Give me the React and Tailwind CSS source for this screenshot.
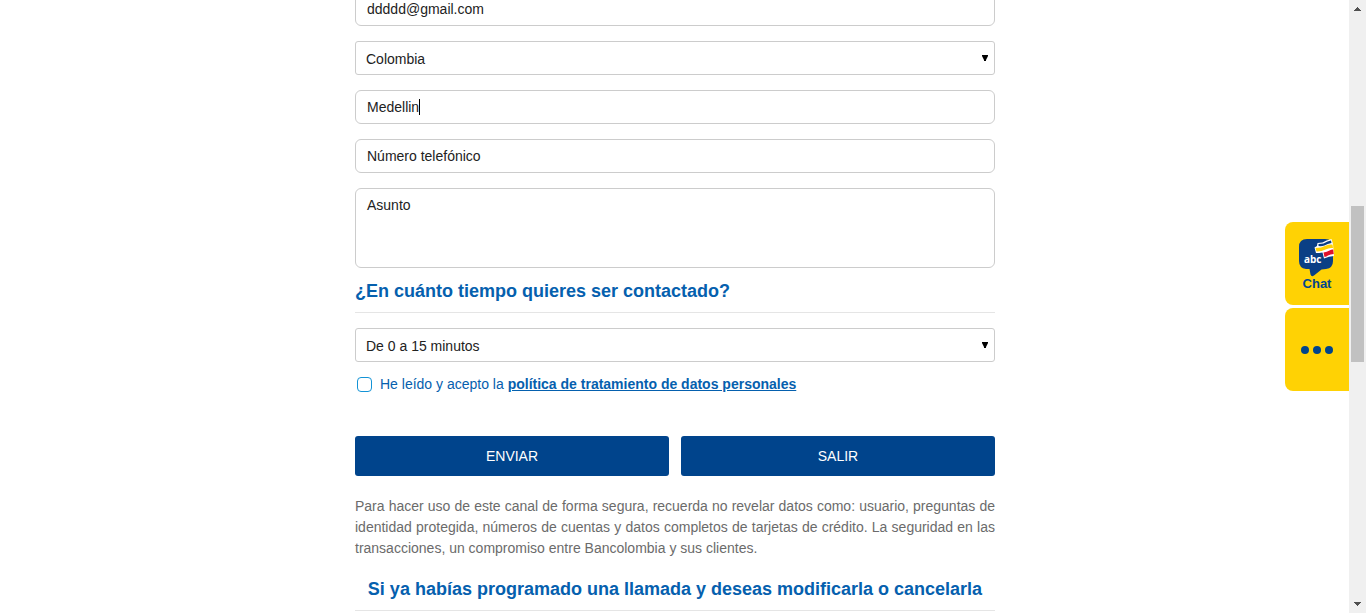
import React from "react";

const field =
  "block h-[34px] w-full rounded-md border border-[#ccc] bg-white px-[11px] text-sm text-[#222] placeholder-[#222] outline-none";

function SelectField({ label, options }) {
  return (
    <div className="relative">
      <select
        aria-label={label}
        className="block h-[34px] w-full appearance-none rounded-[3px] border border-[#ccc] bg-white px-[10px] pt-[2px] text-sm leading-6 text-[#222] outline-none"
      >
        {options.map((o) => (
          <option key={o}>{o}</option>
        ))}
      </select>
      <svg viewBox="0 0 6 6" className="pointer-events-none absolute top-[14px] right-[7px] h-[6px] w-[6px]" aria-hidden="true">
        <path d="M0 0H6V1L4 5V6H2V5L0 1Z" fill="#000" />
      </svg>
    </div>
  );
}

function SectionTitle({ children, className = "" }) {
  return (
    <h2 className={`border-b border-[#e5e5e5] pb-[9px] text-lg leading-6 font-bold text-[#0560ae] ${className}`}>
      {children}
    </h2>
  );
}

function ChatIcon() {
  return (
    <svg viewBox="0 0 36 40" className="h-10 w-9" aria-hidden="true">
      <path
        d="M8 1H26Q34 1 34 9V23Q34 30 27 31L22.500 31.500L15 37.500Q12.500 39.500 11.500 36.500L10.500 31L7 31Q0 30 0 23V9Q0 1 8 1Z"
        fill="#0a3f85"
      />
      <path d="M15.500 9.500L18 8L18.500 5Q24 5 27.500 2.500L32.500 1L34 6L35 18Q30 18 25 20.500L23.500 14.500Q20 15 17 15Z" fill="#fff" />
      <path d="M19.500 6Q25 6 28.500 3.500L32 2.500L32.500 5Q28.500 5.500 25.500 7.500Q22.500 8.500 19.500 8Z" fill="#0a3f85" />
      <path d="M16.500 10Q22.500 10 26.500 7.800Q30 6 33.500 6.500L34 10Q30 9.500 26.500 11.500Q22 13.800 17.500 13.500Z" fill="#ffd204" />
      <path d="M24.500 14.500Q28 14 30.500 12.500Q32.500 11.300 34.200 11.500L34.700 16Q31.500 16 29 17.500Q27.500 18.500 25.500 19Z" fill="#e0112b" />
      <text x="5" y="24.500" fill="#fff" fontSize="10" fontWeight="700" fontFamily="Open Sans, sans-serif">abc</text>
    </svg>
  );
}

function Scrollbar() {
  return (
    <div className="flex w-[17px] shrink-0 flex-col items-center justify-between bg-[#f0f0f0] py-[7px]" aria-hidden="true">
      <svg viewBox="0 0 7 4" className="h-1 w-[7px]" shapeRendering="crispEdges">
        <path d="M3 0H4V1H5V2H6V3H7V4H0V3H1V2H2V1H3Z" fill="#505050" />
      </svg>
      <div className="mt-[195px] mb-auto h-[156px] w-[13px] bg-[#c1c1c1]" />
      <svg viewBox="0 0 7 4" className="h-1 w-[7px]" shapeRendering="crispEdges">
        <path d="M0 0H7V1H6V2H5V3H4V4H3V3H2V2H1V1H0Z" fill="#505050" />
      </svg>
    </div>
  );
}

export default function App() {
  return (
    <div className="relative flex h-screen overflow-hidden bg-white font-['Liberation_Sans',Arial,sans-serif]">
      <main className="min-w-0 flex-1 overflow-hidden pl-px">
        <form className="mx-auto -mt-2 w-full max-w-[640px]" onSubmit={(e) => e.preventDefault()}>
          <div className="flex flex-col gap-[15px]">
            <input aria-label="Correo" type="email" defaultValue="ddddd@gmail.com" className={field} />
            <SelectField label="País" options={["Colombia"]} />
            <div className="relative">
              <input aria-label="Ciudad" type="text" defaultValue="Medellin" className={field} />
              <span className="absolute top-[9px] left-16 h-4 w-px bg-black" aria-hidden="true" />
            </div>
            <input aria-label="Número telefónico" type="tel" placeholder="Número telefónico" className={field} />
            <textarea
              aria-label="Asunto"
              placeholder="Asunto"
              className="block h-20 w-full resize-none rounded-md border border-[#ccc] bg-white px-[11px] py-[6px] text-sm text-[#222] placeholder-[#222] outline-none"
            />
          </div>
          <SectionTitle className="mt-[11px] mb-[15px]">¿En cuánto tiempo quieres ser contactado?</SectionTitle>
          <SelectField label="Tiempo de contacto" options={["De 0 a 15 minutos"]} />
          <div className="mt-3 flex items-center gap-2 pl-[2px] text-sm text-[#0560ae]">
            <input id="terms" type="checkbox" className="h-[15px] w-[15px] appearance-none rounded-[4px] border border-[#1493d6] bg-white" />
            <label htmlFor="terms">
              He leído y acepto la{" "}
              <a href="#politica" className="font-bold underline">política de tratamiento de datos personales</a>
            </label>
          </div>
          <div className="mt-[42px] grid grid-cols-2 gap-3 text-sm text-white">
            <button type="submit" className="h-10 rounded-[3px] bg-[#00448c]">ENVIAR</button>
            <button type="button" className="h-10 rounded-[3px] bg-[#00448c]">SALIR</button>
          </div>
          <p className="mt-5 text-justify text-sm leading-[21px] text-[#6b6b6b]">
            Para hacer uso de este canal de forma segura, recuerda no revelar datos como: usuario, preguntas de identidad
            protegida, números de cuentas y datos completos de tarjetas de crédito. La seguridad en las transacciones, un
            compromiso entre Bancolombia y sus clientes.
          </p>
          <SectionTitle className="mt-[18px] text-center">
            Si ya habías programado una llamada y deseas modificarla o cancelarla
          </SectionTitle>
        </form>
      </main>
      <Scrollbar />
      <aside className="absolute top-[222px] right-[17px] flex w-16 flex-col gap-[3px]">
        <button type="button" className="flex h-[83px] flex-col items-center rounded-l-lg bg-[#ffd204] pt-4 text-[13px] font-bold text-[#00448c]">
          <ChatIcon />
          <span className="leading-3">Chat</span>
        </button>
        <button type="button" aria-label="Más opciones" className="flex h-[83px] items-center justify-center rounded-l-lg bg-[#ffd204]">
          <svg viewBox="0 0 32 8" className="h-2 w-8" fill="#00448c" aria-hidden="true">
            <circle cx="4" cy="4" r="4" />
            <circle cx="16" cy="4" r="4" />
            <circle cx="28" cy="4" r="4" />
          </svg>
        </button>
      </aside>
    </div>
  );
}
